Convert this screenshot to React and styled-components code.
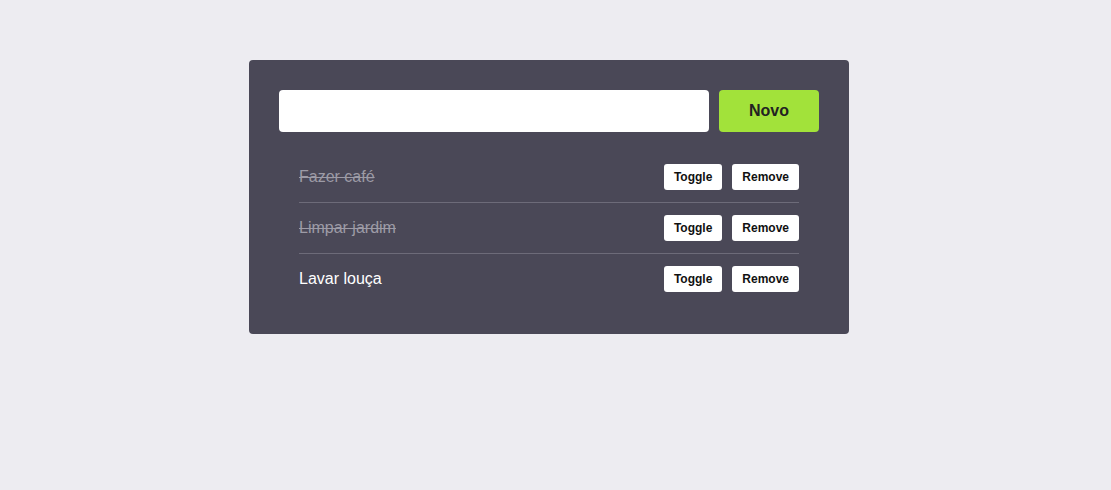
import React, { useState } from 'react';
import styled, { createGlobalStyle } from 'styled-components';

const GlobalStyle = createGlobalStyle`
  body {
    margin: 0;
    background-color: #edecf1;
    font-family: "Liberation Sans", Arial, sans-serif;
  }
`;

const Page = styled.div`
  display: flex;
  justify-content: center;
  padding: 60px 13px 0 0;
`;

const Card = styled.div`
  width: 600px;
  box-sizing: border-box;
  padding: 30px;
  background-color: #4a4857;
  border-radius: 4px;
`;

const Form = styled.div`
  display: flex;
  gap: 10px;
`;

const TextInput = styled.input`
  flex: 1;
  height: 42px;
  box-sizing: border-box;
  border: none;
  border-radius: 4px;
  background: #fff;
  padding: 0 12px;
  font-size: 16px;
  outline: none;
`;

const NewButton = styled.button`
  width: 100px;
  height: 42px;
  border: none;
  border-radius: 4px;
  background-color: #a2e23a;
  color: #222;
  font-family: inherit;
  font-size: 16px;
  font-weight: bold;
  cursor: pointer;
`;

const List = styled.ul`
  list-style: none;
  margin: 20px 0 0;
  padding: 0 20px;
`;

const Item = styled.li`
  display: flex;
  align-items: center;
  justify-content: space-between;
  height: 50px;
  border-bottom: 1px solid #6d6b79;
  &:last-child {
    border-bottom: none;
  }
`;

const Label = styled.span`
  font-size: 16px;
  color: ${(p) => (p.$done ? '#9d9ba6' : '#ffffff')};
  text-decoration: ${(p) => (p.$done ? 'line-through' : 'none')};
`;

const Actions = styled.div`
  display: flex;
  gap: 10px;
`;

const SmallButton = styled.button`
  height: 26px;
  padding: 0 10px;
  border: none;
  border-radius: 3px;
  background: #fff;
  color: #111;
  font-family: inherit;
  font-size: 12px;
  font-weight: bold;
  cursor: pointer;
`;

const App = () => {
  const [text, setText] = useState('');
  const [todos, setTodos] = useState([
    { id: 1, title: 'Fazer café', done: true },
    { id: 2, title: 'Limpar jardim', done: true },
    { id: 3, title: 'Lavar louça', done: false },
  ]);

  const addTodo = () => {
    if (!text.trim()) return;
    setTodos([...todos, { id: Date.now(), title: text, done: false }]);
    setText('');
  };

  const toggle = (id) =>
    setTodos(todos.map((t) => (t.id === id ? { ...t, done: !t.done } : t)));
  const remove = (id) => setTodos(todos.filter((t) => t.id !== id));

  return (
    <Page>
      <GlobalStyle />
      <Card>
        <Form>
          <TextInput value={text} onChange={(e) => setText(e.target.value)} />
          <NewButton onClick={addTodo}>Novo</NewButton>
        </Form>
        <List>
          {todos.map((t) => (
            <Item key={t.id}>
              <Label $done={t.done}>{t.title}</Label>
              <Actions>
                <SmallButton onClick={() => toggle(t.id)}>Toggle</SmallButton>
                <SmallButton onClick={() => remove(t.id)}>Remove</SmallButton>
              </Actions>
            </Item>
          ))}
        </List>
      </Card>
    </Page>
  );
};

export default App;
